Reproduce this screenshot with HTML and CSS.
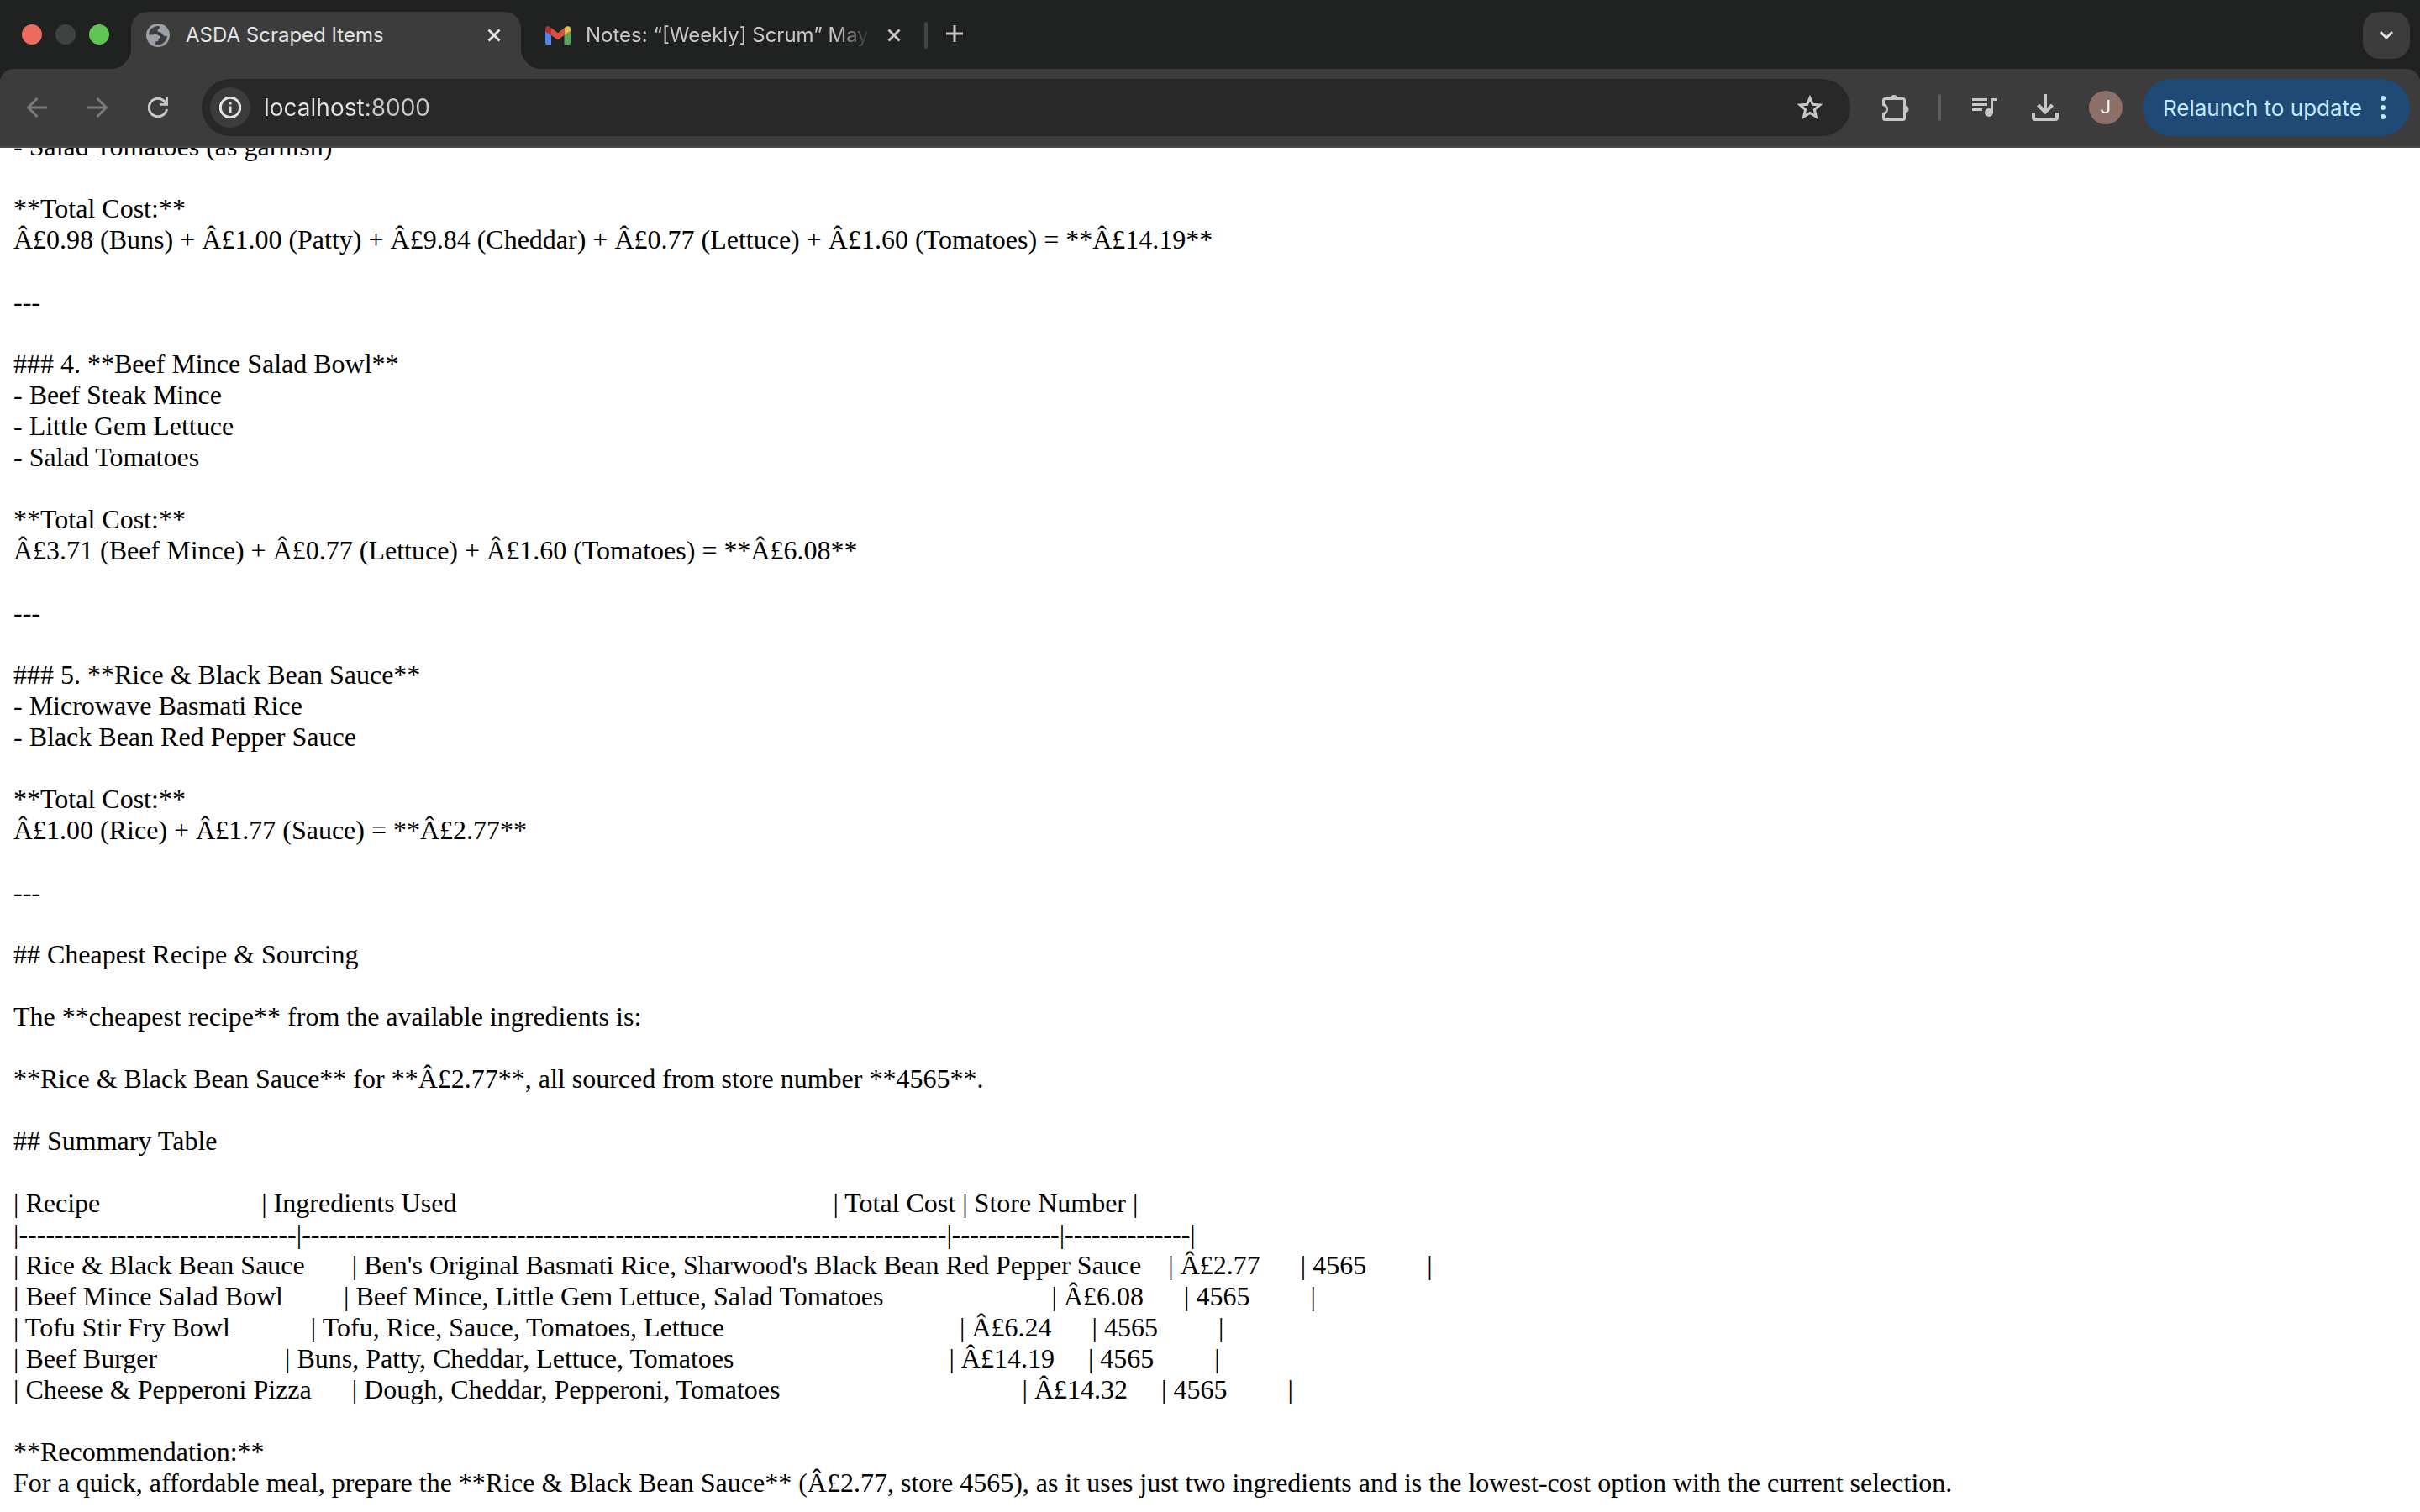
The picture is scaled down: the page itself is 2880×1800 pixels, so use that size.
FILE: index.html
```html
<!DOCTYPE html>
<html lang="en">
<head>
    <meta charset="UTF-8">
    <meta name="viewport" content="width=device-width, initial-scale=1.0">
    <title>ASDA Scraped Items</title>
    <link rel="stylesheet" href="styles.css">
</head>
<body>
    <header class="browser">
        <div class="tab-strip">
            <div class="window-controls">
                <button class="light close" aria-label="Close window"></button>
                <button class="light minimise" aria-label="Minimise window"></button>
                <button class="light zoom" aria-label="Zoom window"></button>
            </div>

            <div class="tab active">
                <button class="tab-label">
                    <svg class="favicon" width="30" height="28" viewBox="-1 0 30 28">
                        <circle cx="14" cy="14" r="14" fill="#9aa0a6"/>
                        <path d="M3 13.5A11 11 0 0 1 15.500 3.100L16 5.500L13.500 7.500V9.500L17 10.500L19 12L21 14.800L25 15A11 11 0 0 1 11 24.700V21.500L14.500 21V18L17 17.500V15L13 13.500L10.500 11.500L8.500 13.500Z" fill="#3c3c3c"/>
                    </svg>
                    <span class="tab-title">ASDA Scraped Items</span>
                </button>
                <button class="tab-close" aria-label="Close tab">
                    <svg width="16" height="16" viewBox="0 0 16 16"><path d="M1.5 1.5L14.5 14.5M14.5 1.5L1.5 14.5"/></svg>
                </button>
            </div>

            <div class="tab">
                <button class="tab-label">
                    <svg class="favicon" width="30" height="22" viewBox="0 0 30 22">
                        <path d="M0 6L7 10.5V22H2Q0 22 0 20Z" fill="#5086ec"/>
                        <path d="M30 6L22.500 10.500V22H28Q30 22 30 20Z" fill="#58a55c"/>
                        <path d="M22.500 2.200L25 .5Q30-1 30 4V6L22.500 11Z" fill="#f1bd42"/>
                        <path d="M7 2.200L15 8.300L22.500 2.200V11L15 16.500L7 11Z" fill="#d9503f"/>
                        <path d="M7 2.200L5 .5Q0-1 0 4V6L7 11Z" fill="#b5332a"/>
                    </svg>
                    <span class="tab-title faded">Notes: “[Weekly] Scrum” May</span>
                </button>
                <button class="tab-close" aria-label="Close tab">
                    <svg width="16" height="16" viewBox="0 0 16 16"><path d="M1.5 1.5L14.5 14.5M14.5 1.5L1.5 14.5"/></svg>
                </button>
            </div>

            <span class="divider"></span>
            <button class="new-tab" aria-label="New tab">
                <svg width="20" height="20" viewBox="0 0 20 20"><path d="M10 0V20M0 10H20"/></svg>
            </button>
            <button class="tab-search" aria-label="Search tabs">
                <svg width="18" height="12" viewBox="0 0 18 12"><path d="M2 2L9 9L16 2"/></svg>
            </button>
        </div>

        <div class="toolbar">
            <nav class="nav-buttons">
                <button class="icon-button" aria-label="Back" disabled>
                    <svg width="24" height="24" viewBox="0 0 24 24"><path d="M24 12H2M12.500 1L1.500 12L12.500 23"/></svg>
                </button>
                <button class="icon-button" aria-label="Forward" disabled>
                    <svg width="24" height="24" viewBox="0 0 24 24"><path d="M0 12H22M11.500 1L22.500 12L11.500 23"/></svg>
                </button>
                <button class="icon-button" aria-label="Reload">
                    <svg width="24" height="24" viewBox="0 0 24 24">
                        <path d="M22.500 14A10.700 10.700 0 1 1 19.500 4.400L21 6"/>
                        <path d="M24 0V9.700H14.300V7H18.500L21.300 4.500V0Z" fill="currentColor" stroke="none"/>
                    </svg>
                </button>
            </nav>

            <form class="omnibox">
                <button type="button" class="site-info" aria-label="View site information">
                    <svg width="26" height="26" viewBox="0 0 26 26">
                        <circle cx="13" cy="13" r="11.700"/>
                        <path d="M13 11.500V19M13 6.800V9.500"/>
                    </svg>
                </button>
                <input type="text" class="url" aria-label="Address" value="localhost:8000">
                <button type="button" class="star" aria-label="Bookmark this tab">
                    <svg width="32" height="30" viewBox="0 0 32 30"><path d="M16 3.500L19.300 11.300L27.800 12L21.400 17.600L23.300 25.900L16 21.500L8.700 25.900L10.600 17.600L4.200 12L12.700 11.300Z"/></svg>
                </button>
            </form>

            <div class="actions">
                <button class="icon-button" aria-label="Extensions">
                    <svg width="32" height="32" viewBox="0 0 32 32">
                        <path d="M3.500 5.500H24.500Q26.500 5.500 26.500 7.500V28.500Q26.500 30.500 24.500 30.500H3.500Q1.500 30.500 1.500 28.500V23.500Q5.500 22 5.500 18Q5.500 14 1.500 12.500V7.500Q1.500 5.500 3.500 5.500Z"/>
                        <path d="M10 5A4 4 0 0 1 18 5ZM27.500 14A4 4 0 0 1 27.500 22Z" fill="currentColor" stroke="none"/>
                    </svg>
                </button>
                <span class="divider"></span>
                <button class="icon-button" aria-label="Media controls">
                    <svg width="30" height="24" viewBox="0 0 30 24">
                        <path d="M0 2.500H18M0 8.500H18M0 14.500H12M23.500 19V2.500H30"/>
                        <circle cx="20" cy="18" r="5" fill="currentColor" stroke="none"/>
                    </svg>
                </button>
                <button class="icon-button" aria-label="Downloads">
                    <svg class="heavy" width="32" height="32" viewBox="0 0 32 32"><path d="M16 0V21M7.500 13L16 21.500L24.500 13M2 22V28Q2 30 4 30H28Q30 30 30 28V22"/></svg>
                </button>
                <button class="avatar" aria-label="Profile">J</button>
                <button class="relaunch">
                    Relaunch to update
                    <svg width="6" height="28" viewBox="0 0 6 28"><circle cx="3" cy="3" r="3"/><circle cx="3" cy="14" r="3"/><circle cx="3" cy="25" r="3"/></svg>
                </button>
            </div>
        </div>
    </header>

    <main class="page">
<pre class="output">
- Salad Tomatoes (as garnish)

**Total Cost:**
Â£0.98 (Buns) + Â£1.00 (Patty) + Â£9.84 (Cheddar) + Â£0.77 (Lettuce) + Â£1.60 (Tomatoes) = **Â£14.19**

---

### 4. **Beef Mince Salad Bowl**
- Beef Steak Mince
- Little Gem Lettuce
- Salad Tomatoes

**Total Cost:**
Â£3.71 (Beef Mince) + Â£0.77 (Lettuce) + Â£1.60 (Tomatoes) = **Â£6.08**

---

### 5. **Rice &amp; Black Bean Sauce**
- Microwave Basmati Rice
- Black Bean Red Pepper Sauce

**Total Cost:**
Â£1.00 (Rice) + Â£1.77 (Sauce) = **Â£2.77**

---

## Cheapest Recipe &amp; Sourcing

The **cheapest recipe** from the available ingredients is:

**Rice &amp; Black Bean Sauce** for **Â£2.77**, all sourced from store number **4565**.

## Summary Table

| Recipe                        | Ingredients Used                                                        | Total Cost | Store Number |
|-------------------------------|------------------------------------------------------------------------|------------|--------------|
| Rice &amp; Black Bean Sauce       | Ben's Original Basmati Rice, Sharwood's Black Bean Red Pepper Sauce    | Â£2.77      | 4565         |
| Beef Mince Salad Bowl         | Beef Mince, Little Gem Lettuce, Salad Tomatoes                         | Â£6.08      | 4565         |
| Tofu Stir Fry Bowl            | Tofu, Rice, Sauce, Tomatoes, Lettuce                                   | Â£6.24      | 4565         |
| Beef Burger                   | Buns, Patty, Cheddar, Lettuce, Tomatoes                                | Â£14.19     | 4565         |
| Cheese &amp; Pepperoni Pizza      | Dough, Cheddar, Pepperoni, Tomatoes                                    | Â£14.32     | 4565         |

**Recommendation:**
For a quick, affordable meal, prepare the **Rice &amp; Black Bean Sauce** (Â£2.77, store 4565), as it uses just two ingredients and is the lowest-cost option with the current selection.</pre>
    </main>
</body>
</html>
```

FILE: styles.css
```css
:root {
    --frame: #202221;
    --toolbar: #3c3c3c;
    --field: #282828;
    --icon: #c7c7c7;
    --text: #e3e3e3;
}

* {
    margin: 0;
    padding: 0;
    box-sizing: border-box;
}

body {
    display: flex;
    flex-direction: column;
    height: 100vh;
    background: white;
    font-family: Inter, "Liberation Sans", sans-serif;
}

button {
    display: flex;
    align-items: center;
    justify-content: center;
    border: none;
    background: none;
    color: inherit;
    font: inherit;
    flex-shrink: 0;
}

svg {
    display: block;
    flex-shrink: 0;
    fill: none;
    stroke: currentColor;
    stroke-width: 3;
}

.browser {
    flex-shrink: 0;
    background: var(--frame);
    color: var(--icon);
}

/* tab strip */
.tab-strip {
    display: flex;
    height: 82px;
    padding: 14px 12px 0 26px;
}

.window-controls {
    display: flex;
    gap: 16px;
    width: 130px;
    padding-top: 15px;
}

.light {
    width: 24px;
    height: 24px;
    border-radius: 50%;
}

.light.close { background: #ed6a5e; }
.light.minimise { background: #404241; }
.light.zoom { background: #61c554; }

.tab {
    position: relative;
    display: flex;
    justify-content: space-between;
    width: 464px;
    height: 68px;
    padding: 0 24px 12px 17px;
    border-radius: 20px 20px 0 0;
}

.tab + .tab {
    padding-left: 29px;
    padding-right: 12px;
}

.tab.active {
    background: var(--toolbar);
    color: var(--text);
}

.tab.active::before,
.tab.active::after {
    content: "";
    position: absolute;
    bottom: 0;
    width: 24px;
    height: 24px;
}

.tab.active::before {
    right: 100%;
    background: radial-gradient(circle at 0 0, transparent 24px, var(--toolbar) 24px);
}

.tab.active::after {
    left: 100%;
    background: radial-gradient(circle at 100% 0, transparent 24px, var(--toolbar) 24px);
}

.tab-label {
    gap: 18px;
    font-size: 24px;
    line-height: 32px;
}

.favicon {
    stroke: none;
}

.tab-title {
    white-space: nowrap;
}

.tab-title.faded {
    mask-image: linear-gradient(to right, black 296px, transparent 340px);
}

.divider {
    width: 4px;
    height: 32px;
    border-radius: 2px;
    background: #5e5e5e;
}

.tab-strip .divider {
    margin: 12px 22px 0 16px;
    background: #444645;
}

.new-tab {
    height: 52px;
}

.tab-search {
    width: 56px;
    height: 56px;
    margin-left: auto;
    border-radius: 20px;
    background: var(--toolbar);
    color: var(--text);
}

/* toolbar */
.toolbar {
    display: flex;
    align-items: center;
    padding: 12px 12px 12px 8px;
    border-bottom: 2px solid #4a4848;
    border-radius: 16px 16px 0 0;
    background: var(--toolbar);
}

.nav-buttons {
    display: flex;
    width: 232px;
}

.icon-button {
    width: 72px;
    height: 68px;
}

.icon-button:disabled {
    color: #7b7b7b;
}

.omnibox {
    display: flex;
    align-items: center;
    flex: 1;
    height: 68px;
    padding: 0 32px 0 10px;
    border-radius: 34px;
    background: var(--field);
}

.site-info {
    width: 48px;
    height: 48px;
    border-radius: 50%;
    background: var(--toolbar);
    color: var(--text);
}

.url {
    flex: 1;
    min-width: 0;
    padding-left: 16px;
    border: none;
    outline: none;
    background: linear-gradient(to right, var(--text) 136px, var(--icon) 136px);
    background-clip: text;
    color: transparent;
    font: 28px/36px Inter, "Liberation Sans", sans-serif;
}

.actions {
    display: flex;
    align-items: center;
    padding-left: 18px;
}

.actions .divider {
    margin: 0 16px 0 14px;
}

.heavy {
    stroke-width: 4;
}

.avatar {
    width: 40px;
    height: 40px;
    margin: 0 24px 0 16px;
    border-radius: 50%;
    background: #8d7168;
    color: white;
    font: 22px/40px Roboto, sans-serif;
}

.relaunch {
    gap: 22px;
    height: 68px;
    padding: 0 29px 0 24px;
    border-radius: 34px;
    background: #1f4a75;
    color: #c2e7ff;
    font-size: 26px;
}

.relaunch svg {
    fill: currentColor;
    stroke: none;
}

/* page, scrolled to the end */
.page {
    display: flex;
    flex: 1;
    flex-direction: column;
    justify-content: flex-end;
    min-height: 0;
    overflow: hidden;
    padding: 16px;
}

.output {
    color: black;
    font: 32px/37px "Liberation Serif", "Times New Roman", serif;
    white-space: pre-wrap;
}
```
